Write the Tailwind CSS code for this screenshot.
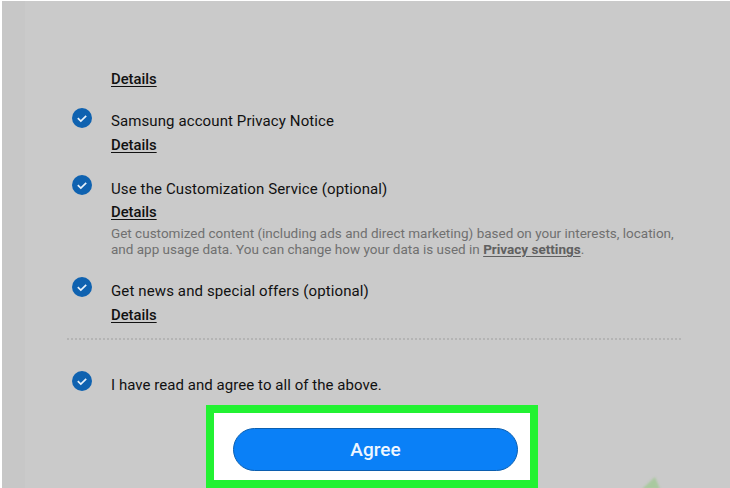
<!DOCTYPE html>
<html lang="en">
<head>
    <meta charset="UTF-8">
    <title>Agree</title>
    <script src="https://cdn.jsdelivr.net/npm/@tailwindcss/browser@4"></script>
</head>
<body class="w-[730px] h-[488px] overflow-hidden bg-white font-['Roboto',sans-serif]">
    <div class="relative w-[730px] h-[488px] pt-px pl-[2px]">
        <div class="relative h-[487px] overflow-hidden bg-[#cacaca]">
            <!-- slightly darker band on the left -->
            <div class="absolute left-0 top-0 bottom-0 w-[23px] bg-[#c7c7c7]"></div>

            <main class="relative pl-[70px] pt-[68px]">
                <div class="pl-[39px]">
                    <a class="block h-5 text-[14.8px] leading-5 font-medium text-[#111] underline underline-offset-2">Details</a>
                </div>

                <!-- Samsung account -->
                <div class="flex mt-[19px]">
                    <svg class="w-5 h-5 mr-[19px] shrink-0" viewBox="0 0 20 20"><circle cx="10" cy="10" r="10" fill="#0f62b0"/><path d="M5.8 10.2l3 2.8 5.4-5.2" fill="none" stroke="#e8f2fb" stroke-width="1.7"/></svg>
                    <div>
                        <p class="h-6 mt-[1px] text-[15px] leading-6 tracking-[0.1px] text-[#111]">Samsung account Privacy Notice</p>
                        <a class="block h-5 mt-[2px] text-[14.8px] leading-5 font-medium text-[#111] underline underline-offset-2">Details</a>
                    </div>
                </div>

                <!-- Customization -->
                <div class="flex mt-[20px]">
                    <svg class="w-5 h-5 mr-[19px] shrink-0" viewBox="0 0 20 20"><circle cx="10" cy="10" r="10" fill="#0f62b0"/><path d="M5.8 10.2l3 2.8 5.4-5.2" fill="none" stroke="#e8f2fb" stroke-width="1.7"/></svg>
                    <div>
                        <p class="h-6 mt-[2px] text-[15px] leading-6 tracking-[0.12px] text-[#111]">Use the Customization Service (optional)</p>
                        <a class="block h-5 mt-[1px] text-[14.8px] leading-5 font-medium text-[#111] underline underline-offset-2">Details</a>
                        <p class="w-[570px] mt-[3px] text-[13.5px] leading-[16px] text-[#707070]">Get customized content (including ads and direct marketing) based on your interests, location, and app usage data. You can change how your data is used in <span class="font-bold text-[#606060] underline underline-offset-2">Privacy settings</span>.</p>
                    </div>
                </div>

                <!-- News -->
                <div class="flex mt-[20px]">
                    <svg class="w-5 h-5 mr-[19px] shrink-0" viewBox="0 0 20 20"><circle cx="10" cy="10" r="10" fill="#0f62b0"/><path d="M5.8 10.2l3 2.8 5.4-5.2" fill="none" stroke="#e8f2fb" stroke-width="1.7"/></svg>
                    <div>
                        <p class="h-6 mt-[2px] text-[15px] leading-6 tracking-[0.12px] text-[#111]">Get news and special offers (optional)</p>
                        <a class="block h-5 mt-[2px] text-[14.8px] leading-5 font-medium text-[#111] underline underline-offset-2">Details</a>
                    </div>
                </div>

                <div class="w-[614px] -ml-[5px] mt-[13px] border-t-2 border-dotted border-[#b4b4b4]"></div>

                <!-- Agree to all -->
                <div class="flex mt-[31px]">
                    <svg class="w-5 h-5 mr-[19px] shrink-0" viewBox="0 0 20 20"><circle cx="10" cy="10" r="10" fill="#0f62b0"/><path d="M5.8 10.2l3 2.8 5.4-5.2" fill="none" stroke="#e8f2fb" stroke-width="1.7"/></svg>
                    <p class="h-6 mt-[2px] text-[15px] leading-6 tracking-[0.05px] text-[#111]">I have read and agree to all of the above.</p>
                </div>
            </main>

            <!-- highlighted button -->
            <div class="absolute left-[204px] top-[404px] w-[332px] h-[83px] border-8 border-[#22f232] bg-white pl-[19px] pt-[15px]">
                <button class="w-[285px] h-[43px] pt-[2px] rounded-full border border-[#0b5fb0] bg-[#0a80f7] text-[19px] font-medium text-[#eef6ff]">Agree</button>
            </div>

            <!-- corner of the next graphic -->
            <svg class="absolute left-[632px] top-[468px] blur-[1px]" width="40" height="20" viewBox="0 0 40 20"><path d="M8 20L21 8l5 12z" fill="#a9c99f"/></svg>
        </div>
    </div>
</body>
</html>
